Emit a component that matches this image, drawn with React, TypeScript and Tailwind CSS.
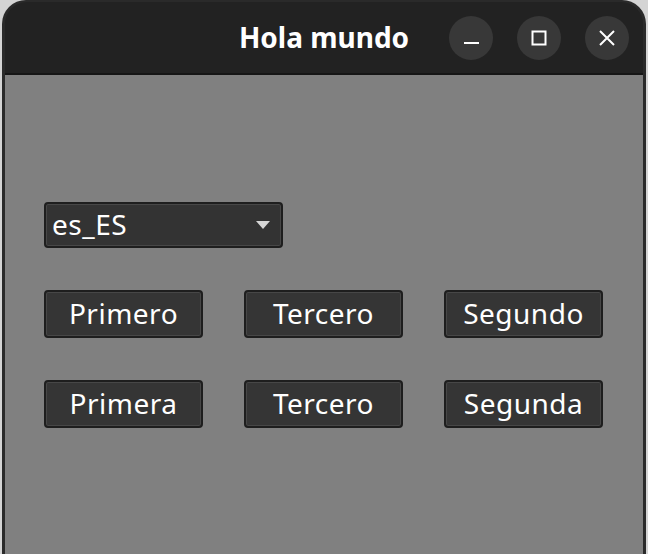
import React from "react";

const font = { fontFamily: '"Noto Sans", "Open Sans", sans-serif' };

function Btn({ label }: { label: string }) {
  return (
    <div className="h-[48px] w-[159px] rounded-[4px] border-2 border-[#1e1e1e] bg-[#353535] shadow-[inset_0_0_0_1px_#474747] flex items-center justify-center text-[28px] tracking-[0.5px] text-white leading-none">
      <span className="pb-[2px]">{label}</span>
    </div>
  );
}

export default function App() {
  return (
    <div className="w-[648px] h-[554px] overflow-hidden bg-[#d4d4d4] px-[2px]" style={font}>
      <div className="h-full w-full rounded-t-[24px] bg-[#2a2a2a] px-[3px] pt-[2px] flex flex-col">
        <div className="relative h-[71px] shrink-0 rounded-t-[22px] bg-[#222222] flex items-center justify-center">
          <span className="text-[28px] font-bold text-white leading-none pb-[2px]">Hola mundo</span>
          <div className="absolute right-[14px] top-[14px] flex gap-[24px]">
            <div className="h-[44px] w-[44px] rounded-full bg-[#383838] flex items-center justify-center">
              <svg width="16" height="16" viewBox="0 0 16 16">
                <rect x="1" y="12" width="15" height="2" fill="#ffffff" />
              </svg>
            </div>
            <div className="h-[44px] w-[44px] rounded-full bg-[#383838] flex items-center justify-center">
              <svg width="16" height="16" viewBox="0 0 16 16">
                <rect x="1.5" y="1.5" width="13" height="13" fill="none" stroke="#ffffff" strokeWidth="2" />
              </svg>
            </div>
            <div className="h-[44px] w-[44px] rounded-full bg-[#383838] flex items-center justify-center">
              <svg width="18" height="18" viewBox="0 0 18 18">
                <path d="M2 2 L16 16 M16 2 L2 16" stroke="#ffffff" strokeWidth="2" />
              </svg>
            </div>
          </div>
        </div>
        <div className="h-[2px] shrink-0 bg-[#161616]" />
        <div className="flex-1 bg-[#808080] pl-[39px] pt-[127px] flex flex-col">
          <div className="h-[46px] w-[239px] rounded-[4px] border-2 border-[#1e1e1e] bg-[#333333] shadow-[inset_0_0_0_1px_#474747] flex items-center justify-between pl-[6px] pr-[11px]">
            <span className="text-[28px] tracking-[0.5px] text-white leading-none pb-[3px]">es_ES</span>
            <svg width="14" height="8" viewBox="0 0 14 8">
              <path d="M0 0 L14 0 L7 8 Z" fill="#d6d6d6" />
            </svg>
          </div>
          <div className="mt-[42px] grid grid-cols-[159px_159px_159px] gap-x-[41px] gap-y-[42px]">
            <Btn label="Primero" />
            <Btn label="Tercero" />
            <Btn label="Segundo" />
            <Btn label="Primera" />
            <Btn label="Tercero" />
            <Btn label="Segunda" />
          </div>
        </div>
      </div>
    </div>
  );
}
